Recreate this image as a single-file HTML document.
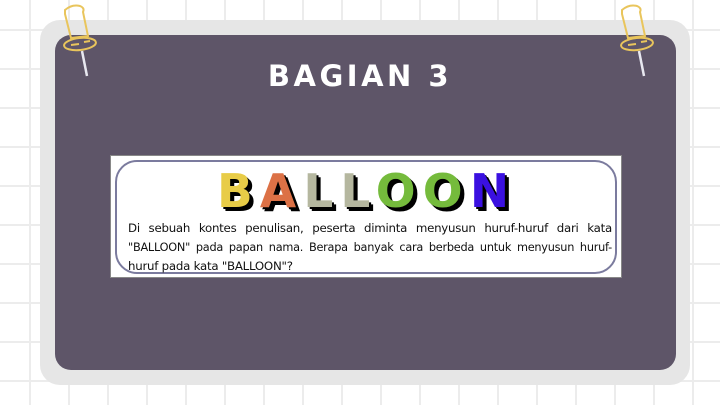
<!DOCTYPE html>
<html><head><meta charset="utf-8"><style>
html,body{margin:0;padding:0}
body{width:720px;height:405px;position:relative;overflow:hidden;background:#fff;
background-image:linear-gradient(#ececec 2px,transparent 2px),linear-gradient(90deg,#ececec 2px,transparent 2px);
background-size:39px 39px;background-position:29px 29px;font-family:"Liberation Sans",sans-serif}
.outer{position:absolute;left:40px;top:20px;width:650px;height:365px;background:#e6e6e6;border-radius:20px}
.inner{position:absolute;left:55px;top:35px;width:621px;height:335px;background:#5e5568;border-radius:16px}
h1{position:absolute;left:0;width:720px;top:59px;margin:0;text-align:center;color:#fff;font-size:29px;font-weight:bold;letter-spacing:3.5px;font-family:"DejaVu Sans",sans-serif}
.img{position:absolute;left:110px;top:155px;width:512px;height:123px;background:#fff;box-sizing:border-box;border:1px solid #888}
.box{position:absolute;left:4px;top:4px;right:4px;bottom:3px;border:2.5px solid #7b7b9e;border-radius:22px}
.word{position:absolute;left:106px;top:8px;font-size:46px;font-weight:900;font-family:"DejaVu Sans",sans-serif;letter-spacing:7px;white-space:nowrap;transform:scaleX(1.02);transform-origin:left}
.word span{text-shadow:2px 2px 0 #000,4px 4px 0 #000}
.t{position:absolute;left:17px;top:63px;width:484px;font-size:11.8px;line-height:19px;color:#111;font-family:"DejaVu Sans",sans-serif;white-space:nowrap;letter-spacing:-0.25px}
.t div{text-align:justify;text-align-last:justify}
.t div.l{text-align-last:left}
</style></head><body>
<div class="outer"></div><div class="inner"></div>
<h1>BAGIAN 3</h1>
<div class="img"><div class="box"></div>
<div class="word"><span style="color:#e8cc47">B</span><span style="color:#dc7146">A</span><span style="color:#b5b79f">L</span><span style="color:#b5b79f">L</span><span style="color:#75bb3c">O</span><span style="color:#75bb3c">O</span><span style="color:#3a10e0">N</span></div>
<div class="t"><div>Di sebuah kontes penulisan, peserta diminta menyusun huruf-huruf dari kata</div><div style="font-size:11.3px">"BALLOON" pada papan nama. Berapa banyak cara berbeda untuk menyusun huruf-</div><div class="l">huruf pada kata "BALLOON"?</div></div>
</div>
<svg width="720" height="405" style="position:absolute;left:0;top:0" fill="none">
<g id="p" stroke="#e9c55c" stroke-width="2">
<path d="M65 10 Q72 4 80 6 Q85 8 83 12 L88 36 L71 38 L65 14 Z"/>
<ellipse cx="80" cy="44" rx="16" ry="6" transform="rotate(-6 80 44)"/>
<path d="M71 45 L79 44 M84 42 L90 41"/>
<path d="M82 51 L87 76" stroke="#e8e8f0" stroke-width="2.5"/>
</g>
<use href="#p" transform="translate(557,0)"/>
</svg>
</body></html>
